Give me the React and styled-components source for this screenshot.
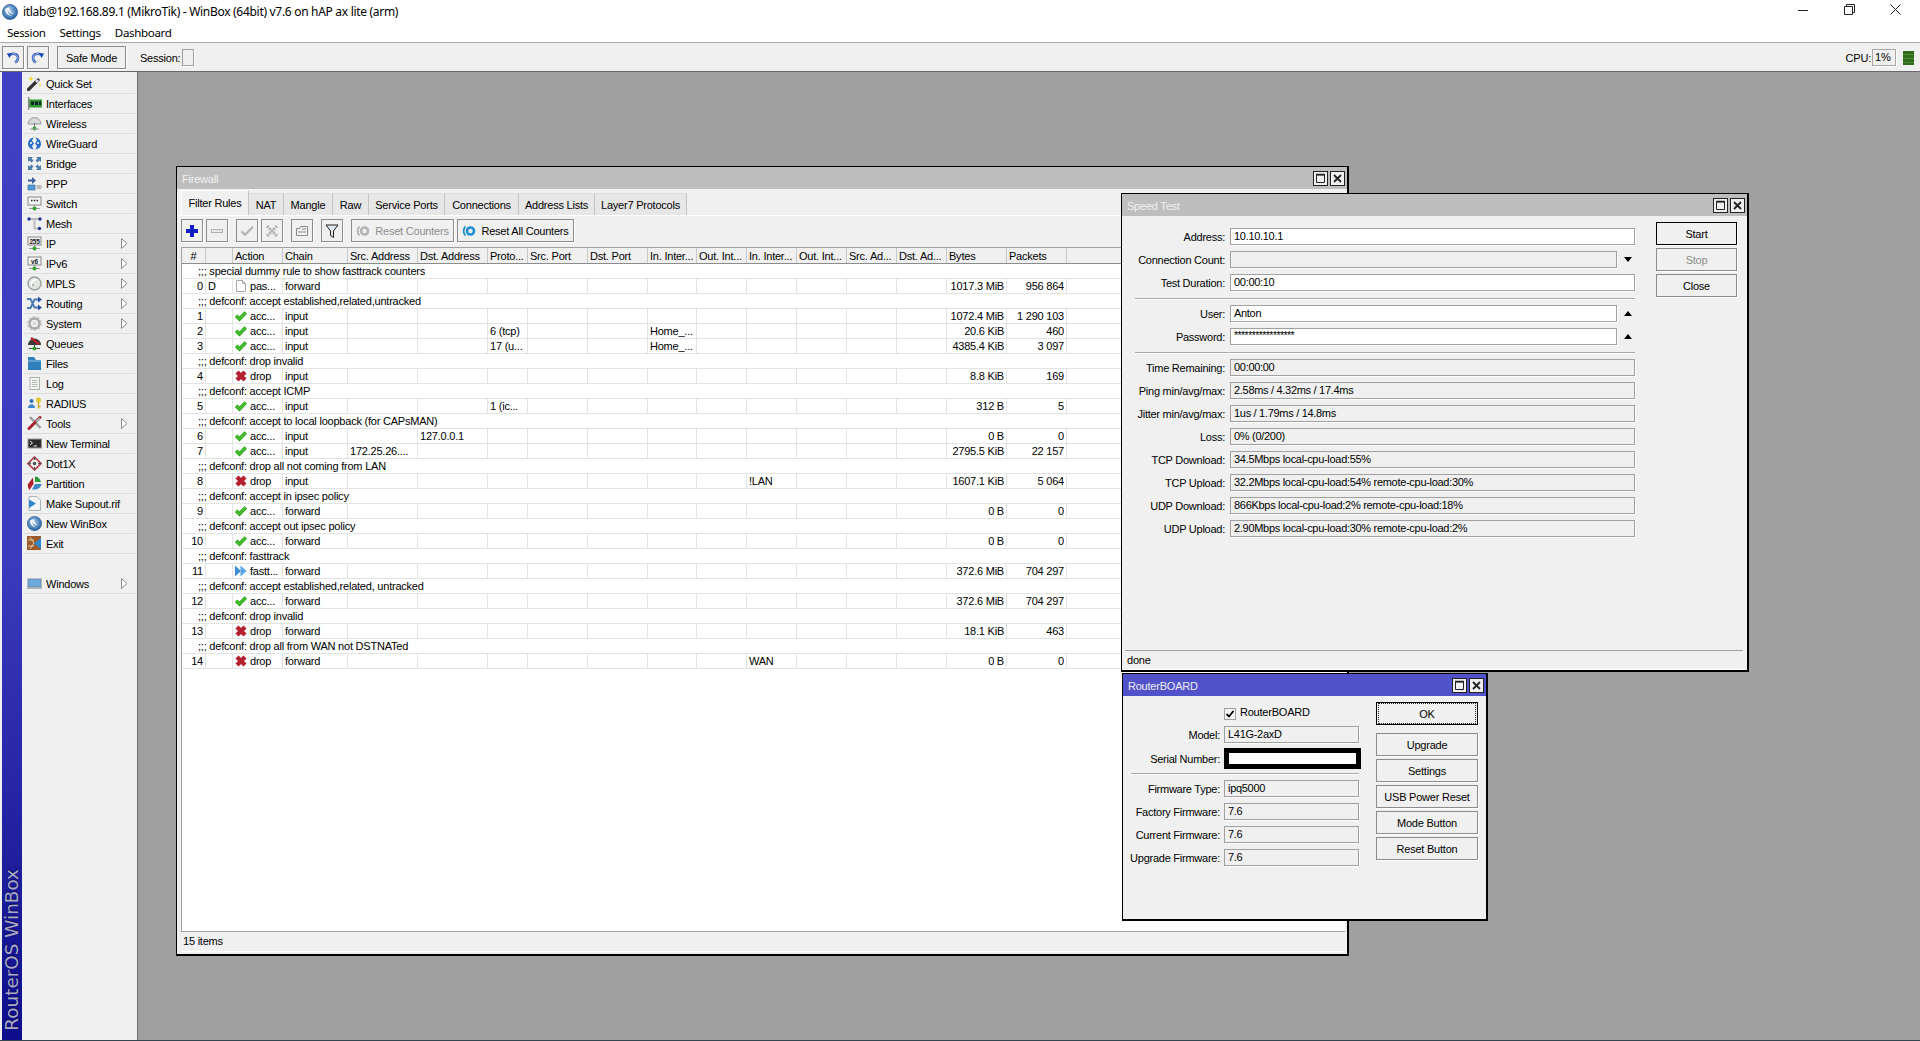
import React from "react";
import styled, { createGlobalStyle } from "styled-components";

const GlobalStyle = createGlobalStyle`
    html, body {
        margin: 0;
        height: 100%;
        overflow: hidden;
        background: #fff;
    }
    body {
        font-family: "Liberation Sans", Arial, sans-serif;
        font-size: 11px;
        letter-spacing: -0.22px;
        color: #000;
    }
    * {
        box-sizing: border-box;
    }
`;

const columns =
    "24px 27px 50px 65px 70px 70px 40px 60px 60px 49px 50px 50px 50px 50px 50px 60px 60px 1fr";

const Screen = styled.div`
    display: flex;
    flex-direction: column;
    height: 100vh;
    background: #fff;
`;

const TitleBar = styled.div`
    display: flex;
    align-items: center;
    height: 21px;
    padding: 2px 0 0 2px;
    font-family: "Noto Sans", "Open Sans", sans-serif;
    font-size: 12px;
    letter-spacing: -0.3px;
`;

const TitleText = styled.span`
    margin-left: 5px;
    flex: 1;
`;

const Caption = styled.div`
    display: flex;
    width: 140px;
    height: 20px;
    margin-top: -4px;
    padding-right: 2px;
`;

const CaptionButton = styled.div`
    width: 46px;
    display: flex;
    align-items: center;
    justify-content: center;
`;

const MenuBar = styled.div`
    display: flex;
    align-items: center;
    gap: 14px;
    height: 21px;
    padding: 1px 0 0 7px;
    font-family: "Noto Sans", "Open Sans", sans-serif;
    font-size: 11.5px;
    letter-spacing: -0.32px;
`;

const ToolBar = styled.div`
    display: flex;
    align-items: center;
    height: 30px;
    padding: 1px 6px 0 2px;
    background: #f0f0f0;
    border-top: 1px solid #a8a8a8;
    border-bottom: 1px solid #696969;
`;

const Btn = styled.div`
    display: flex;
    align-items: center;
    justify-content: center;
    flex: none;
    width: ${p => p.$w || 22}px;
    height: 23px;
    margin-left: ${p => p.$ml || 0}px;
    margin-top: ${p => p.$mt || 0}px;
    gap: 5px;
    background: #f0f0f0;
    border: 1px solid ${p => (p.$strong ? "#000" : "#8c8c8c")};
    box-shadow: 1px 1px 0 #fff;
    color: ${p => (p.$off ? "#8d8d8d" : "#000")};
    font-size: 11px;
    white-space: nowrap;
`;

const FocusMark = styled.span`
    display: flex;
    align-items: center;
    justify-content: center;
    width: 100%;
    height: 100%;
    margin: 1px;
    border: 1px dotted #222;
`;

const SessionLabel = styled.span`
    margin-left: 14px;
`;

const SessionBox = styled.div`
    width: 12px;
    height: 17px;
    margin-left: 2px;
    border: 1px solid #a0a0a0;
    box-shadow: 1px 1px 0 #fff;
`;

const CpuWrap = styled.div`
    display: flex;
    align-items: center;
    margin-left: auto;
`;

const CpuValue = styled.div`
    width: 24px;
    height: 17px;
    margin-left: 1px;
    padding-left: 2px;
    line-height: 15px;
    border: 1px solid #a8a8a8;
    box-shadow: 1px 1px 0 #fff;
`;

const CpuLed = styled.div`
    width: 11px;
    height: 14px;
    margin-left: 7px;
    background: repeating-linear-gradient(#2f6b1d 0 3px, #4d8a3a 3px 4px);
`;

const Body = styled.div`
    display: flex;
    flex: 1;
    min-height: 0;
    border-bottom: 1px solid #33454f;
`;

const Sidebar = styled.div`
    display: flex;
    flex: none;
    width: 138px;
    background: #f0f0f0;
    border-right: 1px solid #6e6e6e;
`;

const Rail = styled.div`
    display: flex;
    align-items: flex-end;
    justify-content: center;
    flex: none;
    width: 20px;
    margin-left: 2px;
    padding-bottom: 9px;
    background: linear-gradient(#4040c4, #3b3bbd 50%, #0e0e8c);
`;

const RailText = styled.span`
    writing-mode: vertical-rl;
    transform: rotate(180deg);
    font-family: "DejaVu Sans", sans-serif;
    font-size: 18.4px;
    letter-spacing: 0;
    line-height: 20px;
    color: #a9a9c6;
    text-shadow: 1px 0 1px #0a0a50;
    white-space: nowrap;
`;

const Menu = styled.div`
    flex: 1;
    padding: 2px 2px 0 2px;
`;

const MenuRow = styled.div`
    display: flex;
    align-items: center;
    height: 20px;
    margin-bottom: ${p => (p.$gap ? 20 : 0)}px;
    padding-left: 3px;
    border-bottom: 1px solid #dcdcdc;
    svg {
        flex: none;
    }
`;

const MenuLabel = styled.span`
    margin-left: 4px;
    flex: 1;
`;

const ArrowSlot = styled.span`
    display: flex;
    margin-right: 7px;
`;

const Desktop = styled.div`
    position: relative;
    flex: 1;
    background: #a0a0a0;
    overflow: hidden;
`;

const Win = styled.div`
    position: absolute;
    left: ${p => p.$x}px;
    top: ${p => p.$y}px;
    width: ${p => p.$w}px;
    height: ${p => p.$h}px;
    display: flex;
    flex-direction: column;
    background: #f0f0f0;
    border: 1px solid #000;
    border-right-width: 2px;
    border-bottom-width: 2px;
`;

const WinHead = styled.div`
    display: flex;
    align-items: center;
    flex: none;
    height: 22px;
    padding: 0 2px 0 5px;
    color: ${p => (p.$active ? "#eeeef8" : "#f0f0f0")};
    background: ${p => (p.$active ? "#4f52c8" : "#bebebe")};
`;

const WinName = styled.span`
    flex: 1;
    padding-top: 2px;
`;

const HeadButton = styled.div`
    display: flex;
    align-items: center;
    justify-content: center;
    width: 15px;
    height: 15px;
    margin-left: 2px;
    background: #f0f0f0;
    border: 1px solid #222;
`;

const Tabs = styled.div`
    display: flex;
    align-items: flex-end;
    flex: none;
    height: 27px;
    padding: 0 0 0 4px;
    border-bottom: 1px solid #fff;
`;

const Tab = styled.div`
    display: flex;
    align-items: center;
    justify-content: center;
    width: ${p => p.$w}px;
    height: ${p => (p.$active ? 25 : 22)}px;
    padding-top: ${p => (p.$active ? 0 : 1)}px;
    background: ${p => (p.$active ? "#f0f0f0" : "#e7e7e7")};
    border-right: 1px solid #c4c4c4;
    border-top: 1px solid ${p => (p.$active ? "#fff" : "#dcdcdc")};
    border-left: ${p => (p.$active ? "1px solid #fff" : "none")};
    white-space: nowrap;
`;

const RuleTools = styled.div`
    display: flex;
    flex: none;
    align-items: flex-start;
    height: 31px;
    padding: 3px 0 0 4px;
`;

const Table = styled.div`
    flex: 1;
    min-height: 0;
    margin: 0 2px 0 4px;
    background: #fff;
    border-left: 1px solid #a0a0a0;
    overflow: hidden;
`;

const HeadRow = styled.div`
    display: grid;
    grid-template-columns: ${columns};
    height: 17px;
    background: #f0f0f0;
    border-top: 1px solid #a0a0a0;
    border-bottom: 1px solid #8c8c8c;
`;

const HeadCell = styled.div`
    padding-left: ${p => (p.$center ? 0 : 2)}px;
    text-align: ${p => (p.$center ? "center" : "left")};
    line-height: 16px;
    border-right: ${p => (p.$last ? "none" : "1px solid #c8c8c8")};
    white-space: nowrap;
    overflow: hidden;
`;

const Row = styled.div`
    display: grid;
    grid-template-columns: ${columns};
    height: 15px;
    border-bottom: 1px solid #e3e3e3;
`;

const Cell = styled.div`
    display: flex;
    align-items: center;
    justify-content: ${p => (p.$right ? "flex-end" : "flex-start")};
    gap: 3px;
    padding: 0 ${p => (p.$right ? 2 : 0)}px 0 2px;
    border-right: ${p => (p.$last ? "none" : "1px solid #e3e3e3")};
    white-space: nowrap;
    overflow: hidden;
`;

const CommentRow = styled.div`
    height: 15px;
    padding-left: 16px;
    line-height: 14px;
    border-bottom: 1px solid #e3e3e3;
    white-space: nowrap;
`;

const StatusBar = styled.div`
    flex: none;
    height: ${p => p.$h || 20}px;
    margin: ${p => p.$m || "0 2px 3px 4px"};
    padding-left: 2px;
    line-height: 18px;
    border-top: 1px solid #a0a0a0;
    box-shadow: 0 1px 0 #fff;
`;

const Content = styled.div`
    display: flex;
    flex: 1;
    min-height: 0;
    padding-top: 6px;
    gap: ${p => p.$gap}px;
`;

const Form = styled.div`
    flex: none;
    width: ${p => p.$w}px;
    padding-top: ${p => p.$pt || 0}px;
`;

const FieldRow = styled.div`
    display: flex;
    align-items: center;
    height: ${p => p.$h || 17}px;
    margin-top: ${p => p.$mt || 0}px;
    margin-bottom: ${p => p.$mb ?? 6}px;
    gap: ${p => p.$gap}px;
`;

const Label = styled.div`
    flex: none;
    width: ${p => p.$w}px;
    text-align: right;
    white-space: nowrap;
    letter-spacing: -0.25px;
`;

const Field = styled.div`
    flex: ${p => (p.$short ? "none" : 1)};
    width: ${p => (p.$short ? "387px" : "auto")};
    height: 17px;
    padding-left: 3px;
    line-height: 15px;
    background: ${p => (p.$ro ? "#f0f0f0" : "#fff")};
    border: 1px solid #a0a0a0;
    box-shadow: 1px 1px 0 #fff;
    white-space: nowrap;
    overflow: hidden;
    letter-spacing: -0.3px;
`;

const Stars = styled.span`
    letter-spacing: -0.55px;
    font-size: 10.5px;
    line-height: 13px;
    display: block;
`;

const SerialBox = styled.div`
    flex: none;
    width: 137px;
    height: 21px;
    background: #fff;
    border: 5px solid #000;
`;

const Triangle = styled.span`
    width: 0;
    height: 0;
    margin-left: 2px;
    border-left: 4px solid transparent;
    border-right: 4px solid transparent;
    ${p =>
        p.$up
            ? "border-bottom: 5px solid #000;"
            : "border-top: 5px solid #000;"}
`;

const Sep = styled.div`
    height: 1px;
    margin: ${p => p.$m};
    background: #a8a8a8;
    box-shadow: 0 1px 0 #fff;
`;

const SideButtons = styled.div`
    display: flex;
    flex-direction: column;
    flex: none;
    gap: 3px;
`;

const CheckRow = styled.div`
    display: flex;
    align-items: flex-end;
    height: 18px;
    margin-bottom: 6px;
    padding-left: 101px;
    gap: 4px;
`;

const CheckBox = styled.div`
    display: flex;
    align-items: center;
    justify-content: center;
    width: 12px;
    height: 12px;
    background: #f4f4f4;
    border: 1px solid #a0a0a0;
`;

const CheckLabel = styled.span`
    line-height: 14px;
    margin-bottom: 1px;
`;

const Tik = ({ size = 16, id }) => (
    <svg width={size} height={size} viewBox="0 0 16 16">
        <defs>
            <radialGradient id={id} cx="45%" cy="40%" r="60%">
                <stop offset="0" stopColor="#a8cbe8" />
                <stop offset="1" stopColor="#2461a4" />
            </radialGradient>
        </defs>
        <circle cx="8" cy="8" r="7.6" fill={`url(#${id})`} stroke="#1c4c86" strokeWidth=".6" />
        <path d="M3 5c.5 5 4 7.5 9.5 7-4 .4-7-2-7-7 1 3 3 5 7 5-3-1-5-3-5-7" fill="#fff" opacity=".9" />
    </svg>
);

const Ico = ({ children }) => (
    <svg width="15" height="15" viewBox="0 0 15 15">
        {children}
    </svg>
);

const menuIcons = {
    quick: (
        <Ico>
            <path d="M1.5 13.5 11 4" stroke="#333" strokeWidth="3.2" strokeLinecap="round" />
            <path d="M9 6 11 4" stroke="#ddd" strokeWidth="3" />
            <path d="M4 0l.8 2 2 .8-2 .8L4 5.6l-.8-2-2-.8 2-.8z" fill="#f1d92a" />
            <circle cx="13" cy="9" r="1" fill="#f1d92a" />
        </Ico>
    ),
    iface: (
        <Ico>
            <rect x="2" y="3.5" width="13" height="8" fill="#2d9a2d" />
            <rect x="4" y="5.5" width="3" height="3.5" fill="#123" />
            <rect x="8" y="5.5" width="3" height="3.5" fill="#123" />
            <rect x="12" y="5.5" width="2" height="3.5" fill="#123" />
            <rect x="1" y="1" width="1.4" height="13" fill="#888" />
        </Ico>
    ),
    wireless: (
        <Ico>
            <path d="M1 8a6.5 6.5 0 0 1 13 0z" fill="#d8d8d8" stroke="#9a9a9a" />
            <path d="M7.5 7v5" stroke="#777" />
            <circle cx="7.5" cy="12.5" r="2" fill="#2da52d" />
            <path d="M3 13h9" stroke="#999" />
        </Ico>
    ),
    wg: (
        <Ico>
            <path d="M6.5 1.5C3 2 1 5 1 8s2 5 5.5 5.5L5 10l2-2.5-2-3z" fill="#2a70c8" />
            <path d="M8.5 1.5C12 2 14 5 14 8s-2 5-5.5 5.5L10 10 8 7.5l2-3z" fill="#2a70c8" />
            <circle cx="4" cy="7" r="1" fill="#fff" />
            <circle cx="11" cy="7" r="1" fill="#fff" />
        </Ico>
    ),
    bridge: (
        <Ico>
            <g fill="#4f7ea8">
                <path d="M1 1h5L4.5 2.5 6.500 4.500 4.500 6.500 2.500 4.500 1 6z" />
                <path d="M14 1H9l1.500 1.500-2 2 2 2 2-2L14 6z" />
                <path d="M1 14h5l-1.500-1.500 2-2-2-2-2 2L1 9z" />
                <path d="M14 14H9l1.500-1.500-2-2 2-2 2 2L14 9z" />
            </g>
        </Ico>
    ),
    ppp: (
        <Ico>
            <path d="M1 3.500h4V1l4 3.500L5 8V5.500H1z" fill="#3a5f9c" />
            <rect x="1" y="9" width="7" height="5" fill="#4f9ad8" stroke="#2c6aa0" strokeWidth=".6" />
            <path d="M9.500 10h5M9.500 12h5" stroke="#aaa" strokeWidth="1.400" />
        </Ico>
    ),
    sw: (
        <Ico>
            <rect x="1" y="1" width="13" height="8" fill="#f3f3f3" stroke="#888" />
            <path d="M4 4.500h1.500M6.800 4.500h1.500M9.600 4.500h1.500" stroke="#222" strokeWidth="1.400" />
            <path d="M7.500 9v3M2 12.500h11" stroke="#999" />
            <circle cx="7.500" cy="12.500" r="2" fill="#2da52d" />
        </Ico>
    ),
    mesh: (
        <Ico>
            <path d="M2 3h11M7.500 3v9.500h5" stroke="#bcbcbc" strokeWidth="1.800" fill="none" />
            <circle cx="2" cy="3" r="1.700" fill="#1e2f8c" />
            <circle cx="13" cy="3" r="1.700" fill="#1e2f8c" />
            <circle cx="12.500" cy="12.500" r="1.700" fill="#1e2f8c" />
        </Ico>
    ),
    ip: (
        <Ico>
            <rect x="1" y="1" width="13" height="8" fill="#f3f3f3" stroke="#888" />
            <text x="7.500" y="7.500" fontSize="6.500" fontWeight="700" textAnchor="middle" fontFamily="Liberation Sans" fill="#222">255</text>
            <path d="M7.500 9v3M2 12.500h11" stroke="#999" />
            <circle cx="7.500" cy="12.500" r="2" fill="#2da52d" />
        </Ico>
    ),
    ipv6: (
        <Ico>
            <rect x="1" y="1" width="13" height="8" fill="#f3f3f3" stroke="#888" />
            <text x="7.500" y="7.500" fontSize="6.500" fontWeight="700" textAnchor="middle" fontFamily="Liberation Sans" fill="#222">v6</text>
            <path d="M7.500 9v3M2 12.500h11" stroke="#999" />
            <circle cx="7.500" cy="12.500" r="2" fill="#2da52d" />
        </Ico>
    ),
    mpls: (
        <Ico>
            <circle cx="7.500" cy="7.500" r="6.500" fill="#e2e6e2" stroke="#9aa39a" strokeWidth="1.400" />
            <path d="M5 10a4 4 0 0 1 4-6" stroke="#fff" strokeWidth="2" fill="none" />
            <circle cx="6" cy="9" r="1" fill="#9aa39a" />
        </Ico>
    ),
    routing: (
        <Ico>
            <path d="M0 3h3.500l4 8.500h4M0 12h3.500l4-8.500h4" stroke="#4a78b4" strokeWidth="1.800" fill="none" />
            <path d="M11 .5 15 3.500l-4 3zM11 8.500l4 3-4 3z" fill="#2a4f9c" />
        </Ico>
    ),
    system: (
        <Ico>
            <circle cx="7.500" cy="7.500" r="5" fill="none" stroke="#a8a8a8" strokeWidth="2.400" />
            <circle cx="7.500" cy="7.500" r="6.400" fill="none" stroke="#bcbcbc" strokeWidth="1.800" strokeDasharray="2 2" />
            <circle cx="7.500" cy="7.500" r="2" fill="#d8d8d8" />
        </Ico>
    ),
    queues: (
        <Ico>
            <path d="M1 9a6.500 6.500 0 0 1 13 0z" fill="#3a3a3a" />
            <path d="M4 2l8 6" stroke="#b8202c" strokeWidth="2.200" />
            <path d="M7.500 9v3M2 12.500h11" stroke="#444" />
            <circle cx="7.500" cy="12.500" r="2" fill="#2da52d" />
        </Ico>
    ),
    files: (
        <Ico>
            <path d="M1 1h6l2 3h5v10H1z" fill="#2f80bd" />
            <path d="M1 5h13" stroke="#8cc0e4" />
        </Ico>
    ),
    log: (
        <Ico>
            <rect x="3" y="1.500" width="9.500" height="12" fill="#f4f6f4" stroke="#aab2aa" />
            <path d="M5 4.500h5.500M5 6.500h5.500M5 8.500h5.500M5 10.500h5.500" stroke="#b4bcb4" />
        </Ico>
    ),
    radius: (
        <Ico>
            <circle cx="4.500" cy="5" r="2" fill="#2f6fb0" />
            <path d="M1 12c0-5 7-5 7 0z" fill="#3f86cc" />
            <circle cx="11.500" cy="4" r="2.500" fill="#e3c52c" />
            <path d="M11.500 6v6.500M11.500 10.500h2" stroke="#c9a81c" strokeWidth="1.400" />
        </Ico>
    ),
    tools: (
        <Ico>
            <path d="M3 1 13.500 12" stroke="#9a9a9a" strokeWidth="2.400" />
            <path d="M13 1.500 2 12.500" stroke="#a8222c" strokeWidth="3" strokeLinecap="round" />
            <path d="M9 6 13 2" stroke="#aab0b0" strokeWidth="2" />
        </Ico>
    ),
    term: (
        <Ico>
            <rect x="1" y="3" width="13.500" height="9" fill="#2b2b2b" stroke="#999" />
            <path d="M3 5l2.500 2L3 9M6.500 10H10" stroke="#eee" fill="none" />
        </Ico>
    ),
    dot1x: (
        <Ico>
            <path d="M7.500 1 14 7.500 7.500 14 1 7.500z" fill="none" stroke="#b83a4a" strokeWidth="1.600" />
            <circle cx="7.500" cy="7.500" r="1.800" fill="#555" />
            <path d="M7.500 1v3M7.500 11v3M1 7.500h3M11 7.500h3" stroke="#555" strokeWidth="1.400" />
        </Ico>
    ),
    part: (
        <Ico>
            <path d="M6 1.500 1 8c-.5 2 0 4 1.500 6L6.500 8z" fill="#b21f2d" />
            <path d="M8 .5c3 0 5 2 6 5.500H8z" fill="#2c9a3c" />
            <path d="M8 8h6.500c-.5 3-3 5.500-7 5.500H5z" fill="#3c86c4" />
        </Ico>
    ),
    supout: (
        <Ico>
            <path d="M2 .5h8l3.500 3.500v10.500H2z" fill="#f4f6f6" stroke="#aab4b8" />
            <path d="M2 3.500 9 7.500 2 12z" fill="#2f86cc" />
        </Ico>
    ),
    exit: (
        <Ico>
            <rect x="0" y="0" width="14" height="14" fill="#9c5a2a" />
            <path d="M1 4h6M1 10h6M3 1l4 6-4 6" stroke="#e8c8a4" fill="none" />
            <path d="M14 2v11L7 7.500z" fill="#2c88d0" />
        </Ico>
    ),
    windows: (
        <Ico>
            <rect x="1" y="3" width="13" height="8" fill="#69a9dc" stroke="#7a8a9a" />
            <rect x="0" y="11" width="15" height="2" fill="#a8b4bc" />
        </Ico>
    ),
};

const menuItems = [
    ["Quick Set", "quick"],
    ["Interfaces", "iface"],
    ["Wireless", "wireless"],
    ["WireGuard", "wg"],
    ["Bridge", "bridge"],
    ["PPP", "ppp"],
    ["Switch", "sw"],
    ["Mesh", "mesh"],
    ["IP", "ip", true],
    ["IPv6", "ipv6", true],
    ["MPLS", "mpls", true],
    ["Routing", "routing", true],
    ["System", "system", true],
    ["Queues", "queues"],
    ["Files", "files"],
    ["Log", "log"],
    ["RADIUS", "radius"],
    ["Tools", "tools", true],
    ["New Terminal", "term"],
    ["Dot1X", "dot1x"],
    ["Partition", "part"],
    ["Make Supout.rif", "supout"],
    ["New WinBox", "tik"],
    ["Exit", "exit", false, true],
    ["Windows", "windows", true],
];

const ActionIcon = ({ type }) => {
    if (type === "acc")
        return (
            <svg width="12" height="12" viewBox="0 0 12 12">
                <path d="M1.2 5.800 4.500 9 10.800 2.500" fill="none" stroke="#2f9e1c" strokeWidth="3.600" />
                <path d="M1.200 5.800 4.500 9 10.800 2.500" fill="none" stroke="#43c42a" strokeWidth="1.800" />
            </svg>
        );
    if (type === "drop")
        return (
            <svg width="12" height="12" viewBox="0 0 12 12">
                <path d="M2 2l8 8M10 2l-8 8" stroke="#b51f2e" strokeWidth="4.400" />
            </svg>
        );
    if (type === "fast")
        return (
            <svg width="12" height="12" viewBox="0 0 12 12">
                <path d="M0 .5l6 5.500-6 5.500z" fill="#3b8fd6" />
                <path d="M5.500 .5l6 5.500-6 5.500z" fill="#5aa6e4" />
            </svg>
        );
    return (
        <svg width="12" height="12" viewBox="0 0 12 12">
            <path d="M1.500.5h6l3 3v8h-9z" fill="#fff" stroke="#a8a8a8" />
            <path d="M7.500.5v3h3" fill="none" stroke="#a8a8a8" />
        </svg>
    );
};

const actionText = { acc: "acc...", drop: "drop", fast: "fastt...", pass: "pas..." };

const rules = [
    { c: "special dummy rule to show fasttrack counters" },
    { n: 0, flag: "D", a: "pass", chain: "forward", bytes: "1017.3 MiB", pk: "956 864" },
    { c: "defconf: accept established,related,untracked" },
    { n: 1, a: "acc", chain: "input", bytes: "1072.4 MiB", pk: "1 290 103" },
    { n: 2, a: "acc", chain: "input", proto: "6 (tcp)", inIf: "Home_...", bytes: "20.6 KiB", pk: "460" },
    { n: 3, a: "acc", chain: "input", proto: "17 (u...", inIf: "Home_...", bytes: "4385.4 KiB", pk: "3 097" },
    { c: "defconf: drop invalid" },
    { n: 4, a: "drop", chain: "input", bytes: "8.8 KiB", pk: "169" },
    { c: "defconf: accept ICMP" },
    { n: 5, a: "acc", chain: "input", proto: "1 (ic...", bytes: "312 B", pk: "5" },
    { c: "defconf: accept to local loopback (for CAPsMAN)" },
    { n: 6, a: "acc", chain: "input", dst: "127.0.0.1", bytes: "0 B", pk: "0" },
    { n: 7, a: "acc", chain: "input", src: "172.25.26....", bytes: "2795.5 KiB", pk: "22 157" },
    { c: "defconf: drop all not coming from LAN" },
    { n: 8, a: "drop", chain: "input", inList: "!LAN", bytes: "1607.1 KiB", pk: "5 064" },
    { c: "defconf: accept in ipsec policy" },
    { n: 9, a: "acc", chain: "forward", bytes: "0 B", pk: "0" },
    { c: "defconf: accept out ipsec policy" },
    { n: 10, a: "acc", chain: "forward", bytes: "0 B", pk: "0" },
    { c: "defconf: fasttrack" },
    { n: 11, a: "fast", chain: "forward", bytes: "372.6 MiB", pk: "704 297" },
    { c: "defconf: accept established,related, untracked" },
    { n: 12, a: "acc", chain: "forward", bytes: "372.6 MiB", pk: "704 297" },
    { c: "defconf: drop invalid" },
    { n: 13, a: "drop", chain: "forward", bytes: "18.1 KiB", pk: "463" },
    { c: "defconf: drop all from WAN not DSTNATed" },
    { n: 14, a: "drop", chain: "forward", inList: "WAN", bytes: "0 B", pk: "0" },
];

const headers = [
    "#", "", "Action", "Chain", "Src. Address", "Dst. Address", "Proto...", "Src. Port", "Dst. Port",
    "In. Inter...", "Out. Int...", "In. Inter...", "Out. Int...", "Src. Ad...", "Dst. Ad...", "Bytes", "Packets",
];

const tabs = [
    ["Filter Rules", 68],
    ["NAT", 35],
    ["Mangle", 49],
    ["Raw", 36],
    ["Service Ports", 76],
    ["Connections", 74],
    ["Address Lists", 76],
    ["Layer7 Protocols", 92],
];

const WinButtons = () => (
    <>
        <HeadButton>
            <svg width="11" height="11" viewBox="0 0 11 11">
                <path d="M1.500 2h8v7.500h-8z" fill="none" stroke="#222" />
                <path d="M1 1.500h9" stroke="#222" strokeWidth="1.500" />
            </svg>
        </HeadButton>
        <HeadButton>
            <svg width="9" height="9" viewBox="0 0 9 9">
                <path d="M1 1l7 7M8 1 1 8" stroke="#222" strokeWidth="1.800" />
            </svg>
        </HeadButton>
    </>
);

const ResetIcon = ({ color }) => (
    <svg width="14" height="12" viewBox="0 0 14 12">
        <path d="M3.500 1.500C1 3.500 1 8.500 3.500 10.500" fill="none" stroke={color} strokeWidth="1.800" />
        <circle cx="8.500" cy="6" r="3.500" fill="none" stroke={color} strokeWidth="2.600" />
    </svg>
);

const GrayIcon = ({ children, stroke = "#b0b0b0" }) => (
    <svg width="18" height="18" viewBox="0 0 18 18" fill="none" stroke={stroke}>
        {children}
    </svg>
);

const TurnArrow = ({ flip }) => (
    <svg width="14" height="14" viewBox="0 0 14 14" fill="none">
        <g transform={flip ? "matrix(-1 0 0 1 14 0)" : undefined}>
            <path d="M4 3.500C8 1.500 12 3.500 12 7c0 2-1 3.500-3 4.500" stroke="#1c4ab8" strokeWidth="2.400" />
            <path d="M4 3.500C8 1.500 12 3.500 12 7c0 2-1 3.500-3 4.500" stroke="#fff" strokeWidth=".7" />
            <path d="M.8 2.500l5.500-.5L3.500 7z" fill="#1c4ab8" />
        </g>
    </svg>
);

const FirewallWindow = () => (
    <Win $x={38} $y={94} $w={1173} $h={790}>
        <WinHead>
            <WinName>Firewall</WinName>
            <WinButtons />
        </WinHead>
        <Tabs>
            {tabs.map(([name, w], i) => (
                <Tab key={name} $w={w} $active={i === 0}>
                    {name}
                </Tab>
            ))}
        </Tabs>
        <RuleTools>
            <Btn>
                <svg width="16" height="16" viewBox="0 0 16 16">
                    <path d="M8 2v12M2 8h12" stroke="#0f1fc4" strokeWidth="4" />
                </svg>
            </Btn>
            <Btn $ml={3}>
                <GrayIcon>
                    <rect x="3.500" y="7.500" width="11" height="3" fill="#e8e8e8" />
                </GrayIcon>
            </Btn>
            <Btn $ml={8}>
                <GrayIcon>
                    <path d="M3.500 9.500 7 13l8-8" strokeWidth="1.800" />
                    <path d="M3.500 7.500 7 11l8-8" stroke="#d8d8d8" />
                </GrayIcon>
            </Btn>
            <Btn $ml={3}>
                <GrayIcon>
                    <path d="M4 4l10 10M14 4 4 14" strokeWidth="3" strokeDasharray="2 1" />
                </GrayIcon>
            </Btn>
            <Btn $ml={8}>
                <GrayIcon stroke="#8a8a8a">
                    <path d="M3.500 6.500h3l1-2h7v9h-11z" />
                    <path d="M9 7h4M5 10h8" />
                </GrayIcon>
            </Btn>
            <Btn $ml={8}>
                <svg width="16" height="18" viewBox="0 0 16 18">
                    <path d="M2 3h12L9.500 9v6.500l-3-2V9z" fill="#dfe8ef" stroke="#222" />
                </svg>
            </Btn>
            <Btn $ml={8} $w={103} $off>
                <ResetIcon color="#b4b4b4" />
                Reset Counters
            </Btn>
            <Btn $ml={3} $w={117}>
                <ResetIcon color="#1d8fd6" />
                Reset All Counters
            </Btn>
        </RuleTools>
        <Table>
            <HeadRow>
                {headers.map((h, i) => (
                    <HeadCell key={i} $center={i === 0}>
                        {h}
                    </HeadCell>
                ))}
                <HeadCell $last />
            </HeadRow>
            {rules.map((r, i) =>
                r.c ? (
                    <CommentRow key={i}>;;; {r.c}</CommentRow>
                ) : (
                    <Row key={i}>
                        <Cell $right>{r.n}</Cell>
                        <Cell>{r.flag}</Cell>
                        <Cell>
                            <ActionIcon type={r.a} />
                            {actionText[r.a]}
                        </Cell>
                        <Cell>{r.chain}</Cell>
                        <Cell>{r.src}</Cell>
                        <Cell>{r.dst}</Cell>
                        <Cell>{r.proto}</Cell>
                        <Cell />
                        <Cell />
                        <Cell>{r.inIf}</Cell>
                        <Cell />
                        <Cell>{r.inList}</Cell>
                        <Cell />
                        <Cell />
                        <Cell />
                        <Cell $right>{r.bytes}</Cell>
                        <Cell $right>{r.pk}</Cell>
                        <Cell $last />
                    </Row>
                )
            )}
        </Table>
        <StatusBar>15 items</StatusBar>
    </Win>
);

const SpeedRow = ({ label, value, ro, short, children }) => (
    <FieldRow $gap={5}>
        <Label $w={103}>{label}</Label>
        <Field $ro={ro} $short={short}>
            {value}
        </Field>
        {children}
    </FieldRow>
);

const speedResults = [
    ["Time Remaining:", "00:00:00"],
    ["Ping min/avg/max:", "2.58ms / 4.32ms / 17.4ms"],
    ["Jitter min/avg/max:", "1us / 1.79ms / 14.8ms"],
    ["Loss:", "0% (0/200)"],
    ["TCP Download:", "34.5Mbps local-cpu-load:55%"],
    ["TCP Upload:", "32.2Mbps local-cpu-load:54% remote-cpu-load:30%"],
    ["UDP Download:", "866Kbps local-cpu-load:2% remote-cpu-load:18%"],
    ["UDP Upload:", "2.90Mbps local-cpu-load:30% remote-cpu-load:2%"],
];

const SpeedTestWindow = () => (
    <Win $x={983} $y={121} $w={628} $h={479}>
        <WinHead>
            <WinName>Speed Test</WinName>
            <WinButtons />
        </WinHead>
        <Content $gap={21}>
            <Form $w={513} $pt={6}>
                <SpeedRow label="Address:" value="10.10.10.1" />
                <SpeedRow label="Connection Count:" ro short>
                    <Triangle />
                </SpeedRow>
                <SpeedRow label="Test Duration:" value="00:00:10" />
                <Sep $m="7px 0 6px 13px" />
                <SpeedRow label="User:" value="Anton" short>
                    <Triangle $up />
                </SpeedRow>
                <SpeedRow label="Password:" value={<Stars>*****************</Stars>} short>
                    <Triangle $up />
                </SpeedRow>
                <Sep $m="7px 0 6px 13px" />
                {speedResults.map(([label, value]) => (
                    <SpeedRow key={label} label={label} value={value} ro />
                ))}
            </Form>
            <SideButtons>
                <Btn $w={81} $strong>
                    Start
                </Btn>
                <Btn $w={81} $off>
                    Stop
                </Btn>
                <Btn $w={81}>Close</Btn>
            </SideButtons>
        </Content>
        <StatusBar $h={19} $m="0 4px 1px 3px">
            done
        </StatusBar>
    </Win>
);

const BoardRow = ({ label, value }) => (
    <FieldRow $gap={4}>
        <Label $w={97}>{label}</Label>
        <Field $ro>{value}</Field>
    </FieldRow>
);

const RouterBoardWindow = () => (
    <Win $x={984} $y={601} $w={366} $h={248}>
        <WinHead $active>
            <WinName>RouterBOARD</WinName>
            <WinButtons />
        </WinHead>
        <Content $gap={17}>
            <Form $w={236}>
                <CheckRow>
                    <CheckBox>
                        <svg width="10" height="10" viewBox="0 0 10 10">
                            <path d="M1.500 5 4 7.500 8.500 2" fill="none" stroke="#000" strokeWidth="1.800" />
                        </svg>
                    </CheckBox>
                    <CheckLabel>RouterBOARD</CheckLabel>
                </CheckRow>
                <BoardRow label="Model:" value="L41G-2axD" />
                <FieldRow $gap={4} $h={21} $mt={-1} $mb={4}>
                    <Label $w={97}>Serial Number:</Label>
                    <SerialBox />
                </FieldRow>
                <Sep $m="0 0 6px 8px" />
                <BoardRow label="Firmware Type:" value="ipq5000" />
                <BoardRow label="Factory Firmware:" value="7.6" />
                <BoardRow label="Current Firmware:" value="7.6" />
                <BoardRow label="Upgrade Firmware:" value="7.6" />
            </Form>
            <SideButtons>
                <Btn $w={102} $strong>
                    <FocusMark>OK</FocusMark>
                </Btn>
                <Btn $w={102} $mt={5}>
                    Upgrade
                </Btn>
                <Btn $w={102}>Settings</Btn>
                <Btn $w={102}>USB Power Reset</Btn>
                <Btn $w={102}>Mode Button</Btn>
                <Btn $w={102}>Reset Button</Btn>
            </SideButtons>
        </Content>
    </Win>
);

export default function App() {
    return (
        <Screen>
            <GlobalStyle />
            <TitleBar>
                <Tik id="app-logo" />
                <TitleText>
                    itlab@192.168.89.1 (MikroTik) - WinBox (64bit) v7.6 on hAP ax lite (arm)
                </TitleText>
                <Caption>
                    <CaptionButton>
                        <svg width="10" height="10" viewBox="0 0 10 10">
                            <path d="M0 5.500h10" stroke="#222" />
                        </svg>
                    </CaptionButton>
                    <CaptionButton>
                        <svg width="11" height="11" viewBox="0 0 11 11" fill="none" stroke="#222">
                            <path d="M.5 2.500h8v8h-8zM2.500 2.500v-2h8v8h-2" />
                        </svg>
                    </CaptionButton>
                    <CaptionButton>
                        <svg width="11" height="11" viewBox="0 0 11 11">
                            <path d="M.5.500l10 10M10.500.500l-10 10" stroke="#222" />
                        </svg>
                    </CaptionButton>
                </Caption>
            </TitleBar>
            <MenuBar>
                <span>Session</span>
                <span>Settings</span>
                <span>Dashboard</span>
            </MenuBar>
            <ToolBar>
                <Btn>
                    <TurnArrow />
                </Btn>
                <Btn $ml={3}>
                    <TurnArrow flip />
                </Btn>
                <Btn $ml={8} $w={69}>
                    Safe Mode
                </Btn>
                <SessionLabel>Session:</SessionLabel>
                <SessionBox />
                <CpuWrap>
                    CPU:
                    <CpuValue>1%</CpuValue>
                    <CpuLed />
                </CpuWrap>
            </ToolBar>
            <Body>
                <Sidebar>
                    <Rail>
                        <RailText>RouterOS WinBox</RailText>
                    </Rail>
                    <Menu>
                        {menuItems.map(([label, icon, sub, gap]) => (
                            <MenuRow key={label} $gap={gap}>
                                {icon === "tik" ? <Tik size={15} id="menu-logo" /> : menuIcons[icon]}
                                <MenuLabel>{label}</MenuLabel>
                                {sub && (
                                    <ArrowSlot>
                                        <svg width="7" height="11" viewBox="0 0 7 11">
                                            <path d="M.5.500v10L6 5.500z" fill="#fff" stroke="#8a8a8a" />
                                        </svg>
                                    </ArrowSlot>
                                )}
                            </MenuRow>
                        ))}
                    </Menu>
                </Sidebar>
                <Desktop>
                    <FirewallWindow />
                    <SpeedTestWindow />
                    <RouterBoardWindow />
                </Desktop>
            </Body>
        </Screen>
    );
}
